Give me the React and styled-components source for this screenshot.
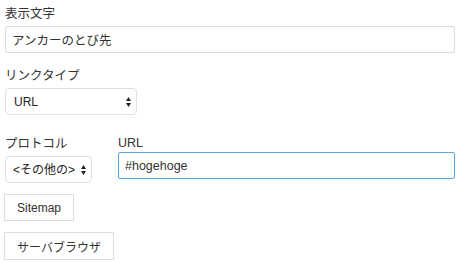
import React from "react";
import styled, { createGlobalStyle } from "styled-components";

const GlobalStyle = createGlobalStyle`
  html, body {
    margin: 0;
    padding: 0;
    background: #ffffff;
  }
  body {
    font-family: "Liberation Sans", "Noto Sans CJK JP", sans-serif;
    font-size: 12px;
    color: #333333;
  }
`;

const Form = styled.div`
  display: flex;
  flex-direction: column;
  padding: 6px 7px 0 5px;
  width: 450px;
`;

const Field = styled.div`
  display: flex;
  flex-direction: column;
  margin-top: ${(p) => p.$top || 0}px;
`;

const Label = styled.label`
  display: block;
  font-size: 12.5px;
  line-height: 17px;
  height: 17px;
  margin-bottom: ${(p) => (p.$gap != null ? p.$gap : 3)}px;
  color: #333;
`;

const TextInput = styled.input`
  box-sizing: border-box;
  height: 27px;
  width: ${(p) => p.$width || "100%"};
  padding: 0 6px;
  font-family: inherit;
  font-size: 12.5px;
  color: #333;
  background: #fff;
  border: 1px solid ${(p) => (p.$focused ? "#5ba6e8" : "#dcdcdc")};
  border-radius: 2px;
  outline: none;
`;

const SelectWrap = styled.div`
  position: relative;
  width: ${(p) => p.$width}px;
  height: 27px;
`;

const Select = styled.select`
  box-sizing: border-box;
  appearance: none;
  -webkit-appearance: none;
  width: 100%;
  height: 100%;
  padding: 0 0 0 ${(p) => p.$pad || 8}px;
  font-family: inherit;
  font-size: 12px;
  color: #222;
  background: #fff;
  border: 1px solid #e0e0e0;
  border-radius: 4px;
  outline: none;
`;

const Arrows = styled.svg`
  position: absolute;
  right: 6px;
  top: 9px;
  pointer-events: none;
`;

const Row = styled.div`
  display: flex;
  align-items: flex-start;
  margin-top: 20px;
`;

const ProtocolCol = styled.div`
  display: flex;
  flex-direction: column;
  width: 113px;
  padding-top: 1px;
`;

const UrlCol = styled.div`
  display: flex;
  flex-direction: column;
  flex: 1;
`;

const Button = styled.button`
  box-sizing: border-box;
  align-self: flex-start;
  height: ${(p) => p.$h || 27}px;
  margin-top: 11px;
  margin-left: -1px;
  padding: 0 ${(p) => p.$px || 12}px;
  font-family: inherit;
  font-size: 12px;
  color: #333;
  background: #fff;
  border: 1px solid #dedede;
  border-radius: 0;
`;

function UpDown() {
  return (
    <Arrows width="5" height="10" viewBox="0 0 5 10">
      <path d="M2.5 0 L5 4 L0 4 Z" fill="#222" />
      <path d="M0 6 L5 6 L2.5 10 Z" fill="#222" />
    </Arrows>
  );
}

export default function App() {
  return (
    <>
      <GlobalStyle />
      <Form>
        <Field>
          <Label>表示文字</Label>
          <TextInput defaultValue="アンカーのとび先" />
        </Field>

        <Field $top={15}>
          <Label>リンクタイプ</Label>
          <SelectWrap $width={132}>
            <Select defaultValue="url">
              <option value="url">URL</option>
              <option value="anchor">ページ内のアンカー</option>
              <option value="email">E-Mail</option>
            </Select>
            <UpDown />
          </SelectWrap>
        </Field>

        <Row>
          <ProtocolCol>
            <Label>プロトコル</Label>
            <SelectWrap $width={87}>
              <Select $pad={7} defaultValue="other">
                <option value="http">http://</option>
                <option value="https">https://</option>
                <option value="other">&lt;その他の&gt;</option>
              </Select>
              <UpDown />
            </SelectWrap>
          </ProtocolCol>
          <UrlCol>
            <Label $gap={0}>URL</Label>
            <TextInput $focused defaultValue="#hogehoge" autoFocus />
          </UrlCol>
        </Row>

        <Button>Sitemap</Button>
        <Button $h={28} $px={12}>サーバブラウザ</Button>
      </Form>
    </>
  );
}
